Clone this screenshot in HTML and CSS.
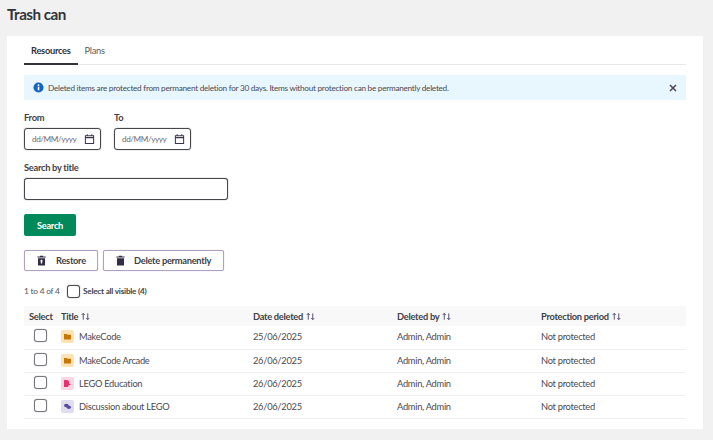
FILE: index.html
```html
<!DOCTYPE html>
<html lang="en">
<head>
<meta charset="utf-8">
<title>Trash can</title>
<link rel="stylesheet" href="styles.css">
</head>
<body>
<h1 class="page-title">Trash can</h1>
<main class="card">
  <nav class="tabs">
    <a class="tab tab-active">Resources</a>
    <a class="tab">Plans</a>
  </nav>
  <div class="alert">
    <svg class="alert-icon" viewBox="0 0 12 12"><circle cx="6" cy="6" r="5.5" fill="#1565c0"/><rect x="5.2" y="5.2" width="1.7" height="3.8" fill="#fff"/><circle cx="6" cy="3.5" r="1" fill="#fff"/></svg>
    <span class="alert-text">Deleted items are protected from permanent deletion for 30 days. Items without protection can be permanently deleted.</span>
    <svg class="alert-close" viewBox="0 0 10 10"><path d="M2 2l6 6M8 2l-6 6" stroke="#4f4459" stroke-width="1.5" fill="none"/></svg>
  </div>
  <div class="dates">
    <div class="field">
      <label class="label">From</label>
      <div class="date-input"><span>dd/MM/yyyy</span>
        <svg class="cal" viewBox="0 0 12 12"><path d="M1.5 2.5h9v8.5h-9zM1.5 4.500h9M3.500 .8v2M8.500 .8v2" stroke="#3d3450" stroke-width="1.1" fill="none"/></svg></div>
    </div>
    <div class="field">
      <label class="label">To</label>
      <div class="date-input"><span>dd/MM/yyyy</span>
        <svg class="cal" viewBox="0 0 12 12"><path d="M1.5 2.5h9v8.5h-9zM1.5 4.500h9M3.500 .8v2M8.500 .8v2" stroke="#3d3450" stroke-width="1.1" fill="none"/></svg></div>
    </div>
  </div>
  <div class="field search-field">
    <label class="label">Search by title</label>
    <input class="search-input" type="text">
  </div>
  <button class="btn-primary">Search</button>
  <div class="actions">
    <button class="btn-outline btn-restore">
      <svg class="btn-icon" viewBox="0 0 12 14"><path d="M4 1.500V.5h4v1h3.500v1.600H.5V1.500zM1.300 4h9.400v9.500H1.300z" fill="#332c45"/><path d="M6 5.500l2.300 2.500H6.900v3H5.100V8H3.700z" fill="#fff"/></svg>
      Restore
    </button>
    <button class="btn-outline btn-delete">
      <svg class="btn-icon" viewBox="0 0 12 14"><path d="M4 1.500V.5h4v1h3.500v1.600H.5V1.500zM1.300 4h9.400v9.500H1.300z" fill="#332c45"/></svg>
      Delete permanently
    </button>
  </div>
  <div class="count-row">
    <span class="count">1 to 4 of 4</span>
    <span class="checkbox checkbox-all"></span>
    <span class="select-all">Select all visible (4)</span>
  </div>
  <table class="table">
    <thead>
      <tr>
        <th class="col-select">Select</th>
        <th class="col-title">Title <svg class="sort" viewBox="0 0 10 9"><path d="M2.500 8V1.200M.8 2.800L2.500 1l1.700 1.800M7.500 1v6.800M5.800 6.200L7.500 8l1.700-1.800" stroke="#4a3f6b" stroke-width="1" fill="none"/></svg></th>
        <th class="col-date">Date deleted <svg class="sort" viewBox="0 0 10 9"><path d="M2.500 8V1.200M.8 2.800L2.500 1l1.700 1.800M7.500 1v6.800M5.800 6.200L7.500 8l1.700-1.800" stroke="#4a3f6b" stroke-width="1" fill="none"/></svg></th>
        <th class="col-by">Deleted by <svg class="sort" viewBox="0 0 10 9"><path d="M2.500 8V1.200M.8 2.800L2.500 1l1.700 1.800M7.500 1v6.800M5.800 6.200L7.500 8l1.700-1.800" stroke="#4a3f6b" stroke-width="1" fill="none"/></svg></th>
        <th>Protection period <svg class="sort" viewBox="0 0 10 9"><path d="M2.500 8V1.200M.8 2.800L2.500 1l1.700 1.800M7.500 1v6.800M5.800 6.200L7.500 8l1.700-1.800" stroke="#4a3f6b" stroke-width="1" fill="none"/></svg></th>
      </tr>
    </thead>
    <tbody>
      <tr>
        <td class="cell-check"><span class="checkbox"></span></td>
        <td><span class="title-cell"><span class="type type-folder"><svg viewBox="0 0 8 7"><path d="M0 .5h3l1 1h4V7H0z" fill="#c77700"/></svg></span>MakeCode</span></td>
        <td>25/06/2025</td><td>Admin, Admin</td><td>Not protected</td>
      </tr>
      <tr>
        <td class="cell-check"><span class="checkbox"></span></td>
        <td><span class="title-cell"><span class="type type-folder"><svg viewBox="0 0 8 7"><path d="M0 .5h3l1 1h4V7H0z" fill="#c77700"/></svg></span>MakeCode Arcade</span></td>
        <td>26/06/2025</td><td>Admin, Admin</td><td>Not protected</td>
      </tr>
      <tr>
        <td class="cell-check"><span class="checkbox"></span></td>
        <td><span class="title-cell"><span class="type type-edu"><svg viewBox="0 0 8 8"><path d="M0 0h4l2 2v2.200L8 5 5 6.500 4.500 8H0z" fill="#e8326f"/></svg></span>LEGO Education</span></td>
        <td>26/06/2025</td><td>Admin, Admin</td><td>Not protected</td>
      </tr>
      <tr>
        <td class="cell-check"><span class="checkbox"></span></td>
        <td><span class="title-cell"><span class="type type-talk"><svg viewBox="0 0 9 7"><ellipse cx="3" cy="2.300" rx="3" ry="2.200" fill="#5a4aa0"/><ellipse cx="6.200" cy="4.500" rx="2.800" ry="2.200" fill="#5a4aa0"/></svg></span>Discussion about LEGO</span></td>
        <td>26/06/2025</td><td>Admin, Admin</td><td>Not protected</td>
      </tr>
    </tbody>
  </table>
</main>
</body>
</html>
```
FILE: styles.css
```css
* { box-sizing: border-box; }
html, body { margin: 0; height: 440px; overflow: hidden; }
body {
  background: #f1f1f1;
  font-family: Lato, "Open Sans", sans-serif;
  color: #3f3f46;
  font-size: 10px;
  letter-spacing: -0.28px;
  padding: 0 10px 0 7px;
}
.page-title {
  margin: 0;
  height: 36px;
  padding-top: 3px;
  font-size: 15.200px;
  letter-spacing: -0.5px;
  line-height: 22px;
  font-weight: 700;
  color: #33333a;
}
.card {
  background: #fff;
  height: 393px;
  padding: 0 17px;
}
.tabs {
  display: flex;
  height: 29px;
  border-bottom: 1px solid #e8e8e8;
}
.tab {
  height: 29px;
  padding: 8px 7px 0;
  line-height: 14px;
  font-size: 9.300px;
  color: #5a5a62;
}
.tab-active {
  font-weight: 700;
  color: #33333a;
  border-bottom: 2px solid #33333a;
}
.alert {
  display: flex;
  align-items: center;
  height: 25px;
  margin-top: 10px;
  padding: 0 9px;
  background: #e8f6fd;
}
.alert-icon { width: 11px; height: 11px; flex: none; }
.alert-text {
  flex: 1;
  margin-left: 4px;
  font-size: 8.200px;
  letter-spacing: -0.26px;
  color: #4a4a52;
}
.alert-close { width: 10px; height: 10px; flex: none; margin-right: -1px; }
.dates {
  display: flex;
  gap: 13px;
  margin-top: 11px;
}
.field { display: flex; flex-direction: column; }
.label {
  height: 17px;
  line-height: 13px;
  font-size: 9.300px;
  font-weight: 700;
  color: #3f3f46;
}
.date-input {
  width: 77px;
  height: 22px;
  display: flex;
  align-items: center;
  justify-content: space-between;
  padding: 0 5px 0 7px;
  border: 1px solid #45454a;
  box-shadow: 0 0 1px #45454a;
  border-radius: 3px;
  font-size: 8.200px;
  letter-spacing: -0.43px;
  color: #6a6a72;
}
.cal { width: 11px; height: 12px; }
.search-field { margin-top: 11px; }
.search-input {
  display: block;
  width: 204px;
  height: 22px;
  border: 1px solid #45454a;
  box-shadow: 0 0 1px #45454a;
  border-radius: 3px;
  background: #fff;
}
.btn-primary {
  display: block;
  width: 52px;
  height: 22px;
  margin-top: 14px;
  padding: 0;
  border: 0;
  border-radius: 2px;
  background: #008a5c;
  color: #fff;
  font: 700 9.300px Lato, sans-serif;
  letter-spacing: -0.28px;
}
.actions { display: flex; gap: 5px; margin-top: 14px; }
.btn-outline {
  display: flex;
  align-items: center;
  height: 21px;
  padding: 0;
  background: #fff;
  border: 1px solid #b0a0c2;
  box-shadow: 0 0 1px #b0a0c2;
  border-radius: 2px;
  color: #3f3f46;
  font: 700 9.300px Lato, sans-serif;
  letter-spacing: -0.28px;
}
.btn-restore { width: 74px; padding-left: 12px; gap: 10px; }
.btn-delete { width: 121px; padding-left: 12px; gap: 9px; }
.btn-icon { width: 9px; height: 11px; flex: none; }
.count-row {
  display: flex;
  align-items: center;
  height: 14px;
  margin-top: 13px;
  font-size: 8.400px;
  letter-spacing: -0.25px;
}
.count { color: #55555c; width: 43px; }
.checkbox {
  display: block;
  width: 13px;
  height: 13px;
  border: 1px solid #77777c;
  box-shadow: 0 0 1px #77777c;
  border-radius: 3px;
  background: #fff;
}
.checkbox-all { margin-right: 3px; border-color: #4a4a4f; box-shadow: 0 0 1px #4a4a4f; }
.select-all { font-weight: 700; color: #3f3f46; font-size: 8.200px; letter-spacing: -0.23px; }
.table {
  width: 662px;
  margin-top: 8px;
  border-collapse: collapse;
  table-layout: fixed;
  font-size: 9.300px;
}
.table th {
  height: 20px;
  padding: 0 0 0 5px;
  background: #f8f8f8;
  text-align: left;
  font-weight: 700;
  color: #3f3f46;
}
.col-select { width: 32px; }
.col-title { width: 192px; }
.col-date { width: 144px; }
.col-by { width: 144px; }
.sort { width: 9px; height: 9px; margin-left: 1px; vertical-align: -1px; }
.table td {
  height: 23px;
  padding: 0 0 1px 5px;
  border-bottom: 1px solid #efefef;
  color: #4a4a52;
}
.table td.cell-check { padding: 0 0 3px 10px; }
.title-cell { display: flex; align-items: center; gap: 5px; }
.type {
  display: flex;
  align-items: center;
  justify-content: center;
  width: 13px;
  height: 13px;
  border-radius: 2px;
  flex: none;
}
.type svg { width: 7px; height: 7px; }
.type-folder { background: #fde3b4; }
.type-edu { background: #fcd6e3; }
.type-talk { background: #e0ddee; }
```
